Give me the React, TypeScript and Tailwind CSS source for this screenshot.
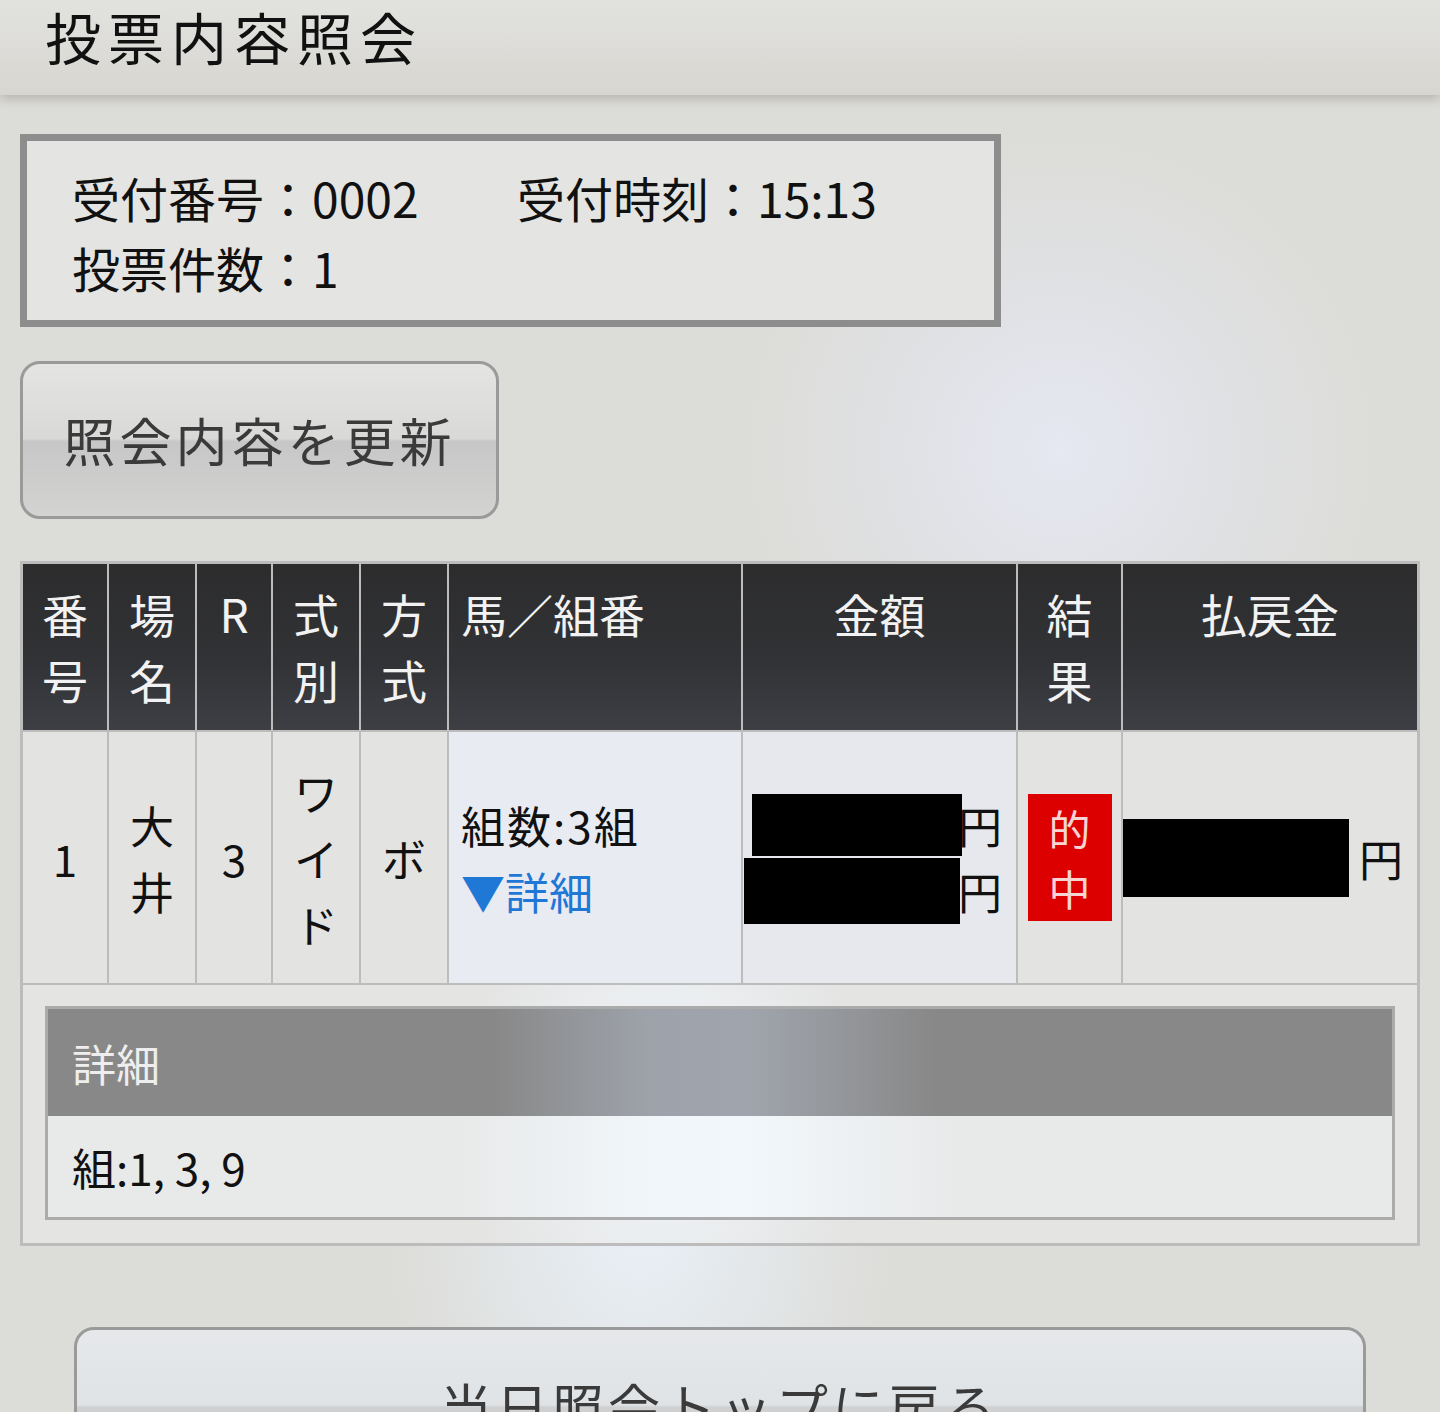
import React from 'react';

const JP = "font-['Noto_Sans_CJK_JP','Noto_Sans',sans-serif]";

const headerCell =
  'bg-[linear-gradient(to_bottom,#2c2c2d_0%,#323336_60%,#3d3f45_100%)] text-[#f2f2f2] text-[46px] leading-[66px] pt-4';

const bodyCell = 'bg-[#e3e3e2] text-[44px] leading-[66px] text-[#111] flex items-center';

function Redacted({ className }: { className: string }) {
  return <span className={`inline-block bg-black ${className}`} />;
}

export default function App() {
  return (
    <div
      className={`${JP} min-h-[1412px] bg-[#dcdcd8] bg-[radial-gradient(circle_at_1060px_450px,#e6e8f2_0px,#e1e2e6_140px,rgba(220,220,216,0)_320px),radial-gradient(ellipse_260px_420px_at_640px_1180px,#eaf1f9_0px,rgba(220,220,216,0)_100%)] pb-24`}
    >
      {/* Title bar */}
      <header className="h-[95px] bg-[linear-gradient(to_bottom,#e2e2df,#d7d6d1)] shadow-[0_4px_10px_rgba(120,110,95,0.35)] pl-[45px]">
        <h1 className="text-[56px] leading-[72px] tracking-[7px] text-[#111]">投票内容照会</h1>
      </header>

      <main className="px-[20px] pt-[39px]">
        {/* Summary box */}
        <section className="w-[981px] border-[7px] border-[#8d8d8d] bg-[#e4e4e2] pl-[45px] pt-[21px] pb-[18px] text-[48px] leading-[70px] text-[#111]">
          <div className="flex">
            <span className="w-[445px]">受付番号：0002</span>
            <span>受付時刻：15:13</span>
          </div>
          <div>投票件数：1</div>
        </section>

        {/* Refresh button */}
        <button className="mt-[34px] w-[479px] h-[158px] rounded-[20px] border-[3px] border-[#9a9a9a] bg-[linear-gradient(to_bottom,#e4e4e3_0%,#d9d9d8_49%,#c7c7c7_51%,#d3d3d2_100%)] text-[52px] tracking-[4px] text-[#3a3a3a] flex items-center justify-center">
          照会内容を更新
        </button>

        {/* Result table */}
        <section className="mt-[42px] w-[1400px] grid grid-cols-[84px_86px_74px_86px_86px_292px_273px_103px_294px] gap-[2px] bg-[#bcbcbc] p-[3px]">
          <div className={`${headerCell} text-center h-[166px]`}>番号</div>
          <div className={`${headerCell} text-center`}>場名</div>
          <div className={`${headerCell} text-center`}>R</div>
          <div className={`${headerCell} text-center`}>式別</div>
          <div className={`${headerCell} text-center`}>方式</div>
          <div className={`${headerCell} px-3`}>馬／組番</div>
          <div className={`${headerCell} text-center`}>金額</div>
          <div className={`${headerCell} text-center px-3`}>結果</div>
          <div className={`${headerCell} text-center`}>払戻金</div>

          <div className={`${bodyCell} justify-center h-[251px]`}>1</div>
          <div className={`${bodyCell} justify-center text-center`}>
            <span className="w-[46px]">大井</span>
          </div>
          <div className={`${bodyCell} justify-center`}>3</div>
          <div className={`${bodyCell} justify-center text-center`}>
            <span className="w-[46px]">ワイド</span>
          </div>
          <div className={`${bodyCell} justify-center`}>ボ</div>
          <div className={`${bodyCell} bg-[#e8ebf1] pl-3`}>
            <div className="flex flex-col">
              <span className="tracking-[2px]">組数:3組</span>
              <span className="text-[#1f78d6]">▼詳細</span>
            </div>
          </div>
          <div className={`${bodyCell} bg-[#e6e8ed] justify-end pr-[14px]`}>
            <div className="flex flex-col items-end">
              <div className="flex items-center">
                <Redacted className="w-[210px] h-[62px] -mr-[4px]" />
                <span>円</span>
              </div>
              <div className="flex items-center">
                <Redacted className="w-[216px] h-[66px] -mr-[2px]" />
                <span>円</span>
              </div>
            </div>
          </div>
          <div className={`${bodyCell} justify-center`}>
            <div className="w-[84px] h-[127px] bg-[#dd0000] text-[#f6d4d4] text-[42px] leading-[60px] flex flex-col items-center justify-center">
              <span>的</span>
              <span>中</span>
            </div>
          </div>
          <div className={`${bodyCell} justify-end pr-[14px]`}>
            <Redacted className="w-[226px] h-[78px] mr-[10px]" />
            <span>円</span>
          </div>

          {/* Detail row */}
          <div className="col-span-9 bg-[#e4e4e3] bg-[radial-gradient(ellipse_200px_260px_at_640px_130px,#f1f6fb_0px,rgba(228,228,227,0)_100%)] px-[22px] pt-[21px] pb-[23px]">
            <div className="border-[3px] border-[#ababab]">
              <div className="h-[107px] bg-[#888888] bg-[linear-gradient(to_right,rgba(136,136,136,0)_33%,#9ea3ab_45%,#a0a5ad_52%,rgba(136,136,136,0)_66%)] pl-[24px] flex items-center text-[44px] text-[#eeeeee]">
                詳細
              </div>
              <div className="h-[101px] bg-[#e8e9e9] bg-[linear-gradient(to_right,rgba(232,233,233,0)_30%,#f1f6fa_45%,#f2f7fb_52%,rgba(232,233,233,0)_68%)] pl-[24px] flex items-center text-[44px] text-[#111]">
                組:1, 3, 9
              </div>
            </div>
          </div>
        </section>

        {/* Back button */}
        <div className="px-[54px] mt-[81px]">
          <button className="w-full h-[158px] rounded-[20px] border-[3px] border-[#9a9a9a] bg-[linear-gradient(to_bottom,#e6e8ea_0%,#dfe3e6_49%,#cfd0d2_51%,#d6d7d8_100%)] text-[52px] tracking-[4px] text-[#3a3a3a] flex items-center justify-center">
            当日照会トップに戻る
          </button>
        </div>
      </main>
    </div>
  );
}
